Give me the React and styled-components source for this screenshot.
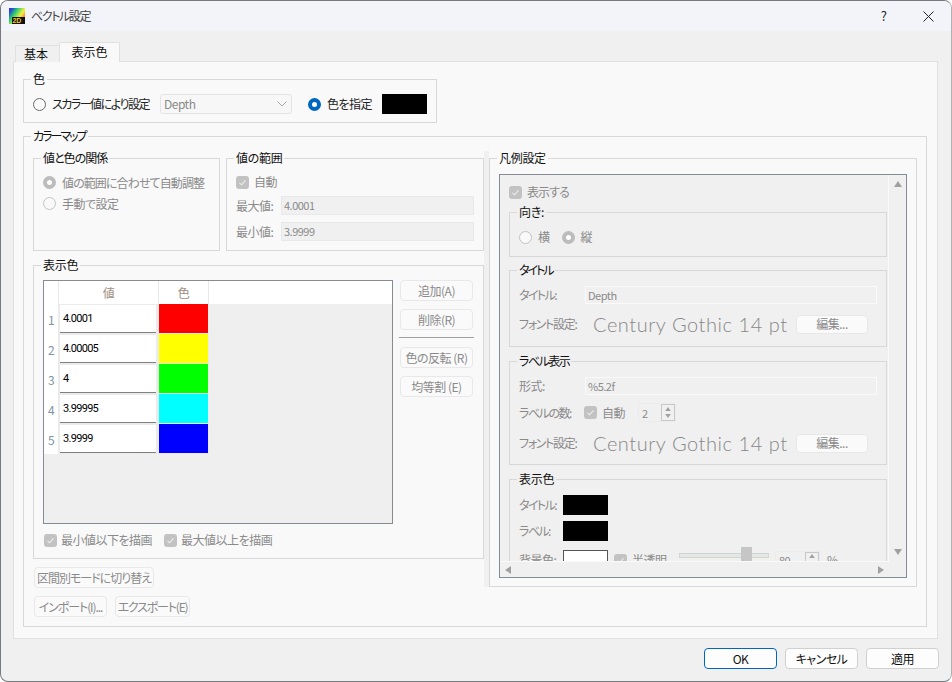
import React from 'react';
import styled, { createGlobalStyle } from 'styled-components';

const Global = createGlobalStyle`
  html, body { margin: 0; padding: 0; background: #ffffff; }
  body {
    font-family: "Noto Sans CJK JP", "Noto Sans", sans-serif;
    font-size: 12px;
    font-feature-settings: "palt";
    letter-spacing: -0.5px;
    line-height: 14px;
  }
`;

const Window = styled.div`
  width: 952px;
  height: 682px;
  box-sizing: border-box;
  border: 1px solid #777a7d;
  border-right-color: #b0b0b0;
  border-radius: 8px;
  background: #f0f0f0;
  overflow: hidden;
  display: flex;
  flex-direction: column;
`;

const TitleBar = styled.div`
  height: 30px;
  flex: none;
  background: #f3f4f9;
  display: flex;
  align-items: center;
  padding-left: 8px;
  color: #444444;
`;

const TitleText = styled.span`
  margin-left: 6px;
  flex: 1;
  letter-spacing: -1.4px;
`;

const TitleAction = styled.div`
  width: 45px;
  height: 30px;
  display: flex;
  align-items: center;
  justify-content: center;
  color: #222222;
  font-size: 13px;
`;

const Body = styled.div`
  flex: 1;
  padding: 11px 12px 0 12px;
  display: flex;
  flex-direction: column;
`;

const TabBar = styled.div`
  display: flex;
  align-items: flex-end;
  height: 20px;
  padding-left: 2px;
  margin-bottom: -1px;
  position: relative;
`;

const Tab = styled.div`
  box-sizing: border-box;
  color: #111111;
  text-align: center;
  border: 1px solid #e0e0e0;
  border-bottom: 0;
  width: ${p => (p.$active ? '61px' : '44px')};
  height: ${p => (p.$active ? '20px' : '17px')};
  line-height: ${p => (p.$active ? '18px' : '15px')};
  padding-right: ${p => (p.$active ? '0' : '3px')};
  background: ${p => (p.$active ? '#f9f9f9' : '#f0f0f0')};
  border-right-width: ${p => (p.$active ? '1px' : '0')};
  border-radius: 2px 2px 0 0;
  letter-spacing: 0;
`;

const Panel = styled.div`
  box-sizing: border-box;
  height: 578px;
  width: 925px;
  background: #f9f9f9;
  border: 1px solid #e0e0e0;
  padding: 10px 9px 0;
`;

const Group = styled.fieldset`
  box-sizing: border-box;
  margin: ${p => p.$mt || 0}px 0 0;
  min-width: 0;
  border: 1px solid #d8d8d8;
  padding: 0 9px;
  width: ${p => p.$w}px;
  height: ${p => p.$h}px;
  flex: none;
`;

const GroupTitle = styled.legend`
  padding: 0 2px;
  margin-left: -2px;
  line-height: 14px;
  height: 14px;
  color: #111111;
  letter-spacing: ${p => p.$ls ?? -0.3}px;
`;

const Row = styled.div`
  display: flex;
  align-items: center;
  height: ${p => p.$h || 20}px;
  margin-top: ${p => p.$mt || 0}px;
`;

const Label = styled.span`
  color: ${p => (p.$on ? '#222222' : '#8a8a8a')};
  margin-left: ${p => p.$ml || 0}px;
  width: ${p => (p.$w ? `${p.$w}px` : 'auto')};
  letter-spacing: ${p => p.$ls ?? -0.5}px;
  flex: none;
  white-space: nowrap;
`;

const RadioMark = styled.span`
  box-sizing: border-box;
  width: 13px;
  height: 13px;
  border-radius: 50%;
  flex: none;
  margin-left: ${p => p.$ml || 0}px;
  background: ${p => (p.$checked ? '#ffffff' : '#f9f9f9')};
  border: ${p =>
    p.$checked
      ? `4px solid ${p.$on ? '#0067c0' : '#bcbcbc'}`
      : `1px solid ${p.$on ? '#6a6a6a' : '#c4c4c4'}`};
`;

const CheckMark = styled.span`
  width: 13px;
  height: 13px;
  border-radius: 3px;
  background: #c2c2c2;
  flex: none;
  display: flex;
  align-items: center;
  justify-content: center;
  margin-left: ${p => p.$ml || 0}px;
`;

const Check = ({ ml }) => (
  <CheckMark $ml={ml}>
    <svg width="9" height="9" viewBox="0 0 9 9">
      <path d="M1.5 4.8 L3.6 6.8 L7.5 2.4" fill="none" stroke="#eeeeee" strokeWidth="1.1" />
    </svg>
  </CheckMark>
);

const Combo = styled.div`
  box-sizing: border-box;
  width: 132px;
  height: 20px;
  margin-left: 11px;
  border: 1px solid #e4e4e4;
  border-radius: 3px;
  background: #f7f7f7;
  color: #8a8a8a;
  padding: 0 4px 0 3px;
  display: flex;
  align-items: center;
  justify-content: space-between;
`;

const Swatch = styled.div`
  box-sizing: border-box;
  width: 45px;
  height: 20px;
  flex: none;
  margin-left: ${p => p.$ml || 0}px;
  background: ${p => p.$c || '#000000'};
  border: ${p => (p.$framed ? '1px solid #555555' : '0')};
`;

const Field = styled.div`
  box-sizing: border-box;
  height: ${p => p.$h || 19}px;
  width: ${p => p.$w}px;
  flex: none;
  background: #f0f0f0;
  border: 1px solid ${p => p.$line || '#e8e8e8'};
  color: #8a8a8a;
  padding: 0 2px;
  line-height: ${p => (p.$h || 19) - 2}px;
  font-size: 11px;
`;

const Columns = styled.div`
  display: flex;
  align-items: flex-start;
  padding-top: 8px;
`;

const LeftCol = styled.div`
  width: 451px;
  flex: none;
`;

const Splitter = styled.div`
  width: 5px;
  height: 436px;
  flex: none;
  background: #f0f0f0;
`;

const TopPair = styled.div`
  display: flex;
  gap: 6px;
  margin-bottom: 7px;
`;

const ColorRow = styled.div`
  display: flex;
  padding-top: 8px;
  gap: 7px;
`;

const Grid = styled.div`
  box-sizing: border-box;
  width: 350px;
  height: 244px;
  border: 1px solid #868b94;
  background: #efefef;
`;

const GridHead = styled.div`
  display: flex;
  height: 23px;
  background: #ffffff;
`;

const HeadCell = styled.div`
  box-sizing: border-box;
  width: ${p => p.$w}px;
  border-left: ${p => (p.$first ? '0' : '1px solid #e8e8e8')};
  text-align: center;
  line-height: 24px;
  color: #a08d80;
`;

const GridRow = styled.div`
  display: flex;
  height: 30px;
`;

const RowNo = styled.div`
  width: 14px;
  background: #ffffff;
  color: #8094a6;
  text-align: center;
  line-height: 32px;
`;

const ValueCell = styled.div`
  box-sizing: border-box;
  width: 100px;
  background: #ebebeb;
  padding: 1px;
  display: flex;
`;

const ValueBox = styled.div`
  flex: 1;
  background: #ffffff;
  border-bottom: 1px solid #808080;
  margin: 0 1px;
  padding-left: 3px;
  font-family: "Roboto", sans-serif;
  font-size: 11px;
  letter-spacing: -0.7px;
  line-height: 28px;
  color: #000000;
`;

const ColorCell = styled.div`
  box-sizing: border-box;
  width: 51px;
  background: ${p => p.$c};
  border: 1px solid #ebebeb;
  border-width: 0 1px 1px 1px;
`;

const SideButtons = styled.div`
  display: flex;
  flex-direction: column;
  width: 73px;
`;

const Button = styled.div`
  box-sizing: border-box;
  width: ${p => p.$w || 73}px;
  height: ${p => p.$h || 21}px;
  margin-bottom: ${p => p.$mb || 0}px;
  border: 1px solid ${p => (p.$primary ? '#0067c0' : p.$on ? '#d0d0d0' : '#e8e8e8')};
  border-radius: 4px;
  background: ${p => (p.$on ? '#fdfdfd' : '#fafafa')};
  color: ${p => (p.$on ? '#111111' : '#8a8a8a')};
  letter-spacing: ${p => p.$ls ?? -0.5}px;
  display: flex;
  align-items: center;
  justify-content: center;
  white-space: nowrap;
  flex: none;
`;

const SideRule = styled.div`
  height: 1px;
  width: 75px;
  margin: 7px 0 9px -1px;
  background: #a0a0a0;
`;

const ButtonRow = styled.div`
  display: flex;
  gap: 8px;
  margin-top: ${p => p.$mt}px;
  padding-left: 1px;
`;

const LegendFrame = styled.div`
  box-sizing: border-box;
  height: 404px;
  width: 408px;
  border: 1px solid #868b94;
  background: #f0f0f0;
  display: grid;
  grid-template-columns: 389px 17px;
  grid-template-rows: 387px 15px;
  margin-top: 9px;
`;

const Viewport = styled.div`
  overflow: hidden;
  box-sizing: border-box;
  border-right: 1px solid #fafafa;
  border-bottom: 1px solid #fafafa;
  padding: 10px 0 0 9px;
`;

const InnerGroup = styled(Group)`
  background: #f0f0f0;
  width: 378px;
`;

const VBar = styled.div`
  display: flex;
  flex-direction: column;
  justify-content: space-between;
  align-items: center;
  padding: 6px 0 7px;
`;

const HBar = styled.div`
  display: flex;
  align-items: center;
  justify-content: space-between;
  padding: 0 5px;
`;

const Arrow = styled.span`
  width: 0;
  height: 0;
  display: block;
  ${p => p.$dir === 'up' && 'border-left: 4px solid transparent; border-right: 4px solid transparent; border-bottom: 6px solid #a0a0a0;'}
  ${p => p.$dir === 'down' && 'border-left: 4px solid transparent; border-right: 4px solid transparent; border-top: 6px solid #a0a0a0;'}
  ${p => p.$dir === 'left' && 'border-top: 4px solid transparent; border-bottom: 4px solid transparent; border-right: 6px solid #a0a0a0;'}
  ${p => p.$dir === 'right' && 'border-top: 4px solid transparent; border-bottom: 4px solid transparent; border-left: 6px solid #a0a0a0;'}
`;

const FontSample = styled.span`
  font-family: "Lato", sans-serif;
  font-weight: 300;
  font-size: 20px;
  letter-spacing: 0.55px;
  color: #888888;
  margin-left: 15px;
  width: 203px;
  flex: none;
  white-space: nowrap;
`;

const Spinner = styled.div`
  box-sizing: border-box;
  width: ${p => p.$w || 38}px;
  height: 19px;
  margin-left: ${p => p.$ml || 0}px;
  border: 1px solid #ebebeb;
  display: flex;
  align-items: center;
  justify-content: space-between;
  padding-left: 3px;
  color: #8a8a8a;
  font-size: 11px;
`;

const SpinButtons = styled.div`
  box-sizing: border-box;
  width: 14px;
  height: 17px;
  border: 1px solid #c8c8c8;
  display: flex;
  flex-direction: column;
  align-items: center;
  justify-content: space-around;
  & > span { transform: scale(0.7); }
`;

const SliderTrack = styled.div`
  width: 88px;
  height: 3px;
  margin-left: 11px;
  background: #e4e8e4;
  border: 1px solid #d4d4d4;
  flex: none;
  position: relative;
  top: -5px;
`;

const SliderThumb = styled.div`
  position: absolute;
  left: 61px;
  top: -7px;
  width: 11px;
  height: 20px;
  background: #c6c6c6;
`;

const Footer = styled.div`
  height: 21px;
  margin-top: 9px;
  display: flex;
  justify-content: flex-end;
  gap: 8px;
`;

const AppIcon = () => (
  <svg width="16" height="16" viewBox="0 0 16 16">
    <defs>
      <linearGradient id="rainbow" x1="0" y1="0" x2="1" y2="0.7">
        <stop offset="0" stopColor="#5a1fc0" />
        <stop offset="0.15" stopColor="#2050d0" />
        <stop offset="0.4" stopColor="#30d070" />
        <stop offset="0.7" stopColor="#f4f040" />
        <stop offset="1" stopColor="#f06030" />
      </linearGradient>
    </defs>
    <rect width="16" height="16" fill="url(#rainbow)" />
    <rect x="3" y="9" width="13" height="7" fill="#111111" />
    <text x="3.4" y="15.2" fontSize="7" fontWeight="700" fill="#f4c820" fontFamily="Liberation Sans" letterSpacing="0">2D</text>
  </svg>
);

const CloseIcon = () => (
  <svg width="11" height="11" viewBox="0 0 11 11">
    <path d="M0.5 0.5 L10.5 10.5 M10.5 0.5 L0.5 10.5" stroke="#222222" strokeWidth="1" />
  </svg>
);

const ChevronIcon = () => (
  <svg width="10" height="6" viewBox="0 0 10 6">
    <path d="M0.5 0.5 L5 5 L9.5 0.5" fill="none" stroke="#a8a8a8" strokeWidth="1" />
  </svg>
);

const rows = [
  ['4.0001', '#ff0000'],
  ['4.00005', '#ffff00'],
  ['4', '#00ff00'],
  ['3.99995', '#00ffff'],
  ['3.9999', '#0000ff'],
];

function FontRow({ mt }) {
  return (
    <Row $h={20} $mt={mt}>
      <Label $w={59} $ls={-1.3}>フォント設定:</Label>
      <FontSample>Century Gothic 14 pt</FontSample>
      <Button $w={72} $h={19}>編集...</Button>
    </Row>
  );
}

export default function App() {
  return (
    <>
      <Global />
      <Window>
        <TitleBar>
          <AppIcon />
          <TitleText>ベクトル設定</TitleText>
          <TitleAction>?</TitleAction>
          <TitleAction><CloseIcon /></TitleAction>
        </TitleBar>
        <Body>
          <TabBar>
            <Tab>基本</Tab>
            <Tab $active>表示色</Tab>
          </TabBar>
          <Panel>
            <Group $w={414} $h={51}>
              <GroupTitle>色</GroupTitle>
              <Row $h={20} $mt={8}>
                <RadioMark $on />
                <Label $on $ml={6} $w={97} $ls={-1.5}>スカラー値により設定</Label>
                <Combo>Depth<ChevronIcon /></Combo>
                <RadioMark $on $checked $ml={16} />
                <Label $on $ml={6} $w={44}>色を指定</Label>
                <Swatch $ml={11} />
              </Row>
            </Group>
            <Group $w={904} $h={498} $mt={6}>
              <GroupTitle $ls={-2}>カラーマップ</GroupTitle>
              <Columns>
                <LeftCol>
                  <TopPair>
                    <Group $w={187} $h={100}>
                      <GroupTitle $ls={-1}>値と色の関係</GroupTitle>
                      <Row $h={21} $mt={7}>
                        <RadioMark $checked />
                        <Label $ml={6} $ls={-0.9}>値の範囲に合わせて自動調整</Label>
                      </Row>
                      <Row $h={21}>
                        <RadioMark />
                        <Label $ml={6}>手動で設定</Label>
                      </Row>
                    </Group>
                    <Group $w={258} $h={100}>
                      <GroupTitle>値の範囲</GroupTitle>
                      <Row $h={20} $mt={7}>
                        <Check />
                        <Label $ml={5}>自動</Label>
                      </Row>
                      <Row $h={19} $mt={4}>
                        <Label $w={45}>最大値:</Label>
                        <Field $w={193}>4.0001</Field>
                      </Row>
                      <Row $h={19} $mt={7}>
                        <Label $w={45}>最小値:</Label>
                        <Field $w={193}>3.9999</Field>
                      </Row>
                    </Group>
                  </TopPair>
                  <Group $w={451} $h={301}>
                    <GroupTitle>表示色</GroupTitle>
                    <ColorRow>
                      <Grid>
                        <GridHead>
                          <HeadCell $w={14} $first />
                          <HeadCell $w={100}>値</HeadCell>
                          <HeadCell $w={50}>色</HeadCell>
                          <HeadCell $w={1} />
                        </GridHead>
                        {rows.map(([value, color], i) => (
                          <GridRow key={value}>
                            <RowNo>{i + 1}</RowNo>
                            <ValueCell><ValueBox>{value}</ValueBox></ValueCell>
                            <ColorCell $c={color} />
                          </GridRow>
                        ))}
                      </Grid>
                      <SideButtons>
                        <Button $mb={8}>追加(A)</Button>
                        <Button>削除(R)</Button>
                        <SideRule />
                        <Button $mb={8}>色の反転 (R)</Button>
                        <Button>均等割 (E)</Button>
                      </SideButtons>
                    </ColorRow>
                    <Row $h={14} $mt={9}>
                      <Check ml={1} />
                      <Label $ml={4}>最小値以下を描画</Label>
                      <Check ml={12} />
                      <Label $ml={4}>最大値以上を描画</Label>
                    </Row>
                  </Group>
                  <ButtonRow $mt={8}>
                    <Button $w={120} $ls={-1}>区間別モードに切り替え</Button>
                  </ButtonRow>
                  <ButtonRow $mt={8}>
                    <Button $w={73} $ls={-1.1}>インポート(I)...</Button>
                    <Button $w={75} $ls={-1.2}>エクスポート(E)</Button>
                  </ButtonRow>
                </LeftCol>
                <Splitter />
                <Group $w={428} $h={436}>
                  <GroupTitle>凡例設定</GroupTitle>
                  <LegendFrame>
                    <Viewport>
                      <Row $h={14}>
                        <Check />
                        <Label $ml={5} $ls={-0.9}>表示する</Label>
                      </Row>
                      <InnerGroup $h={52} $mt={6}>
                        <GroupTitle>向き:</GroupTitle>
                        <Row $h={20} $mt={8}>
                          <RadioMark />
                          <Label $ml={6}>横</Label>
                          <RadioMark $checked $ml={12} />
                          <Label $ml={6}>縦</Label>
                        </Row>
                      </InnerGroup>
                      <InnerGroup $h={84} $mt={6}>
                        <GroupTitle $ls={-2}>タイトル</GroupTitle>
                        <Row $h={18} $mt={9}>
                          <Label $w={66} $ls={-1.6}>タイトル:</Label>
                          <Field $w={292} $h={18} $line="#fafafa">Depth</Field>
                        </Row>
                        <FontRow mt={10} />
                      </InnerGroup>
                      <InnerGroup $h={111} $mt={7}>
                        <GroupTitle $ls={-1.5}>ラベル表示</GroupTitle>
                        <Row $h={18} $mt={9}>
                          <Label $w={66}>形式:</Label>
                          <Field $w={292} $h={18} $line="#fafafa">%5.2f</Field>
                        </Row>
                        <Row $h={19} $mt={8}>
                          <Label $w={65} $ls={-1.5}>ラベルの数:</Label>
                          <Check />
                          <Label $ml={5} $w={23}>自動</Label>
                          <Spinner $ml={13}>
                            2
                            <SpinButtons><Arrow $dir="up" /><Arrow $dir="down" /></SpinButtons>
                          </Spinner>
                        </Row>
                        <FontRow mt={11} />
                      </InnerGroup>
                      <InnerGroup $h={120} $mt={7}>
                        <GroupTitle>表示色</GroupTitle>
                        <Row $h={20} $mt={9}>
                          <Label $w={44} $ls={-1.6}>タイトル:</Label>
                          <Swatch />
                        </Row>
                        <Row $h={20} $mt={6}>
                          <Label $w={44} $ls={-1.6}>ラベル:</Label>
                          <Swatch />
                        </Row>
                        <Row $h={20} $mt={9}>
                          <Label $w={44}>背景色:</Label>
                          <Swatch $c="#ffffff" $framed />
                          <Check ml={6} />
                          <Label $ml={5} $w={36}>半透明</Label>
                          <SliderTrack><SliderThumb /></SliderTrack>
                          <Spinner $ml={6} $w={45}>
                            80
                            <SpinButtons><Arrow $dir="up" /><Arrow $dir="down" /></SpinButtons>
                          </Spinner>
                          <Label $ml={7}>%</Label>
                        </Row>
                      </InnerGroup>
                    </Viewport>
                    <VBar><Arrow $dir="up" /><Arrow $dir="down" /></VBar>
                    <HBar><Arrow $dir="left" /><Arrow $dir="right" /></HBar>
                  </LegendFrame>
                </Group>
              </Columns>
            </Group>
          </Panel>
          <Footer>
            <Button $on $primary>OK</Button>
            <Button $on>キャンセル</Button>
            <Button $on>適用</Button>
          </Footer>
        </Body>
      </Window>
    </>
  );
}
